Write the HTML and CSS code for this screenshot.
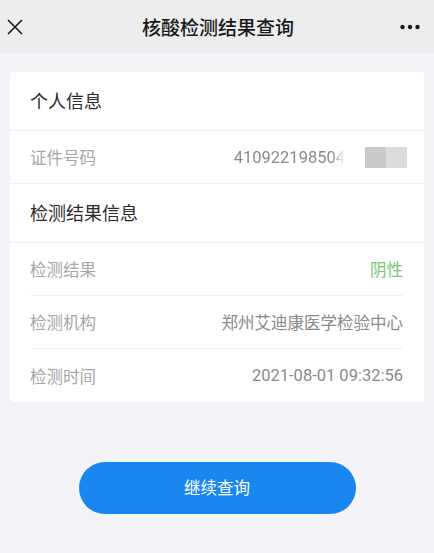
FILE: index.html
```html
<!DOCTYPE html>
<html>
<head>
    <title>核酸检测结果查询</title>
    <meta charset="utf8" />
    <link rel="stylesheet" href="styles.css">
</head>
<body>
    <div class="navbar">
        <svg class="nav-close" width="16" height="16" viewBox="0 0 16 16">
            <path d="M1 1 L15 15 M15 1 L1 15" stroke="#1a1a1a" stroke-width="1.6" fill="none"/>
        </svg>
        <div class="nav-title">核酸检测结果查询</div>
        <svg class="nav-more" width="20" height="6" viewBox="0 0 20 6">
            <circle cx="2.5" cy="3" r="2.2" fill="#1a1a1a"/>
            <circle cx="10" cy="3" r="2.2" fill="#1a1a1a"/>
            <circle cx="17.5" cy="3" r="2.2" fill="#1a1a1a"/>
        </svg>
    </div>

    <div class="container">
        <div class="card">
            <div class="section-title">个人信息</div>
            <div class="row row-wide">
                <span class="label">证件号码</span>
                <span class="value id-value">
                    <span class="id-text">410922198504</span>
                    <span class="mask"><i></i><i></i></span>
                </span>
            </div>

            <div class="section-title">检测结果信息</div>
            <div class="row">
                <span class="label">检测结果</span>
                <span class="value negative">阴性</span>
            </div>
            <div class="row">
                <span class="label">检测机构</span>
                <span class="value">郑州艾迪康医学检验中心</span>
            </div>
            <div class="row row-last">
                <span class="label">检测时间</span>
                <span class="value">2021-08-01 09:32:56</span>
            </div>
        </div>

        <div class="actions">
            <button class="btn-primary">继续查询</button>
        </div>
    </div>
</body>
</html>
```

FILE: styles.css
```css
:root {
    --nav-bg: #ededed;
    --page-bg: #f4f4f8;
    --card-bg: #ffffff;
    --line: #f0f0f2;
    --text: #2b2b2b;
    --label: #a6a6a6;
    --value: #8a8a8a;
    --green: #7dc47a;
    --blue: #1a87f0;
}

* {
    box-sizing: border-box;
    margin: 0;
    padding: 0;
}

body {
    background: var(--page-bg);
    color: var(--text);
    font-family: Roboto, "Noto Sans CJK SC", sans-serif;
    width: 434px;
    height: 553px;
    overflow: hidden;
}

.navbar {
    height: 53px;
    background: var(--nav-bg);
    display: flex;
    align-items: center;
    justify-content: space-between;
    padding: 0 14px 0 7px;
}

.nav-title {
    font-size: 19px;
    font-weight: 500;
    color: #1a1a1a;
    margin-left: 13px;
}

.container {
    padding: 19px 10px 0;
}

.card {
    background: var(--card-bg);
    border-radius: 3px;
}

.section-title {
    height: 59px;
    padding: 0 20px 3px;
    display: flex;
    align-items: center;
    font-size: 18px;
    color: var(--text);
    border-bottom: 1px solid var(--line);
}

.row {
    height: 53px;
    margin: 0 21px 0 20px;
    display: flex;
    align-items: center;
    justify-content: space-between;
    font-size: 16.5px;
    border-bottom: 1px solid var(--line);
}

.row-wide {
    margin: 0;
    padding: 0 21px 0 20px;
}

.row-last {
    border-bottom: none;
}

.label {
    color: var(--label);
}

.value {
    color: var(--value);
}

.negative {
    color: var(--green);
}

.id-value {
    display: flex;
    align-items: center;
}

.id-text {
    -webkit-mask-image: linear-gradient(to right, #000 88%, transparent 100%);
    mask-image: linear-gradient(to right, #000 88%, transparent 100%);
}

.mask {
    display: flex;
    margin-left: 20px;
    margin-right: -4px;
}

.mask i {
    width: 21px;
    height: 21px;
    background: #cbcbcb;
    filter: blur(0.6px);
}

.mask i + i {
    background: #dcdcdc;
}

.actions {
    display: flex;
    justify-content: center;
    padding-top: 60px;
}

.btn-primary {
    width: 277px;
    height: 52px;
    border: none;
    border-radius: 26px;
    background: var(--blue);
    color: #ffffff;
    font-size: 16.5px;
    font-family: inherit;
    padding-bottom: 3px;
}
```
